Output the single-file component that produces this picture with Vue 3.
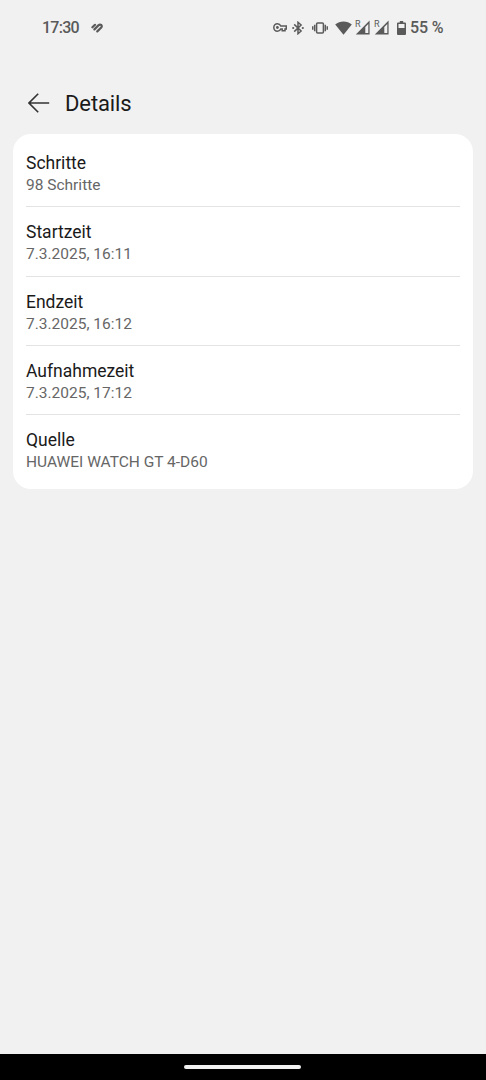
<script setup>
  import {ref} from "vue"

  const entries = ref([
    { label: "Schritte", value: "98 Schritte" },
    { label: "Startzeit", value: "7.3.2025, 16:11" },
    { label: "Endzeit", value: "7.3.2025, 16:12" },
    { label: "Aufnahmezeit", value: "7.3.2025, 17:12" },
    { label: "Quelle", value: "HUAWEI WATCH GT 4-D60" },
  ])
</script>

<template>
  <main>
    <div class="status-bar">
      <span class="clock">17:30</span>
      <svg class="heart" width="12" height="10" viewBox="0 0 12 10">
        <path d="M1.4 4.3 L4 1.8 M3.4 6.4 L7.4 2.4 Q8.8 1 10.2 1.9 Q11.3 3.2 10.2 4.5 L6.3 8.4" />
      </svg>

      <div class="status-icons">
        <svg class="key" width="14" height="9" viewBox="0 0 14 9">
          <path d="M7.8 3 Q6.9 .8 4.4 .8 A3.6 3.7 0 0 0 4.4 8.2 Q6.9 8.2 7.8 6 H9.2 V7.8 H12 V6 H13.3 V3 Z" />
          <circle cx="4.4" cy="4.5" r="1.4" />
        </svg>
        <svg class="bluetooth" width="12" height="14" viewBox="0 0 12 14">
          <path d="M2.2 3.4 L9.1 10 L6 12.7 V1.3 L9.1 4 L2.2 10.6" />
          <circle cx="1.2" cy="7" r="1.1" />
          <circle cx="10.8" cy="7" r="1.1" />
        </svg>
        <svg class="vibrate" width="16" height="12" viewBox="0 0 16 12">
          <rect x="4.6" y="1" width="6.8" height="10" rx="1" />
          <path d="M.7 4.3 V7.7 M2.7 2.8 V9.2 M13.3 2.8 V9.2 M15.3 4.3 V7.7" />
        </svg>
        <svg class="wifi" width="17" height="14" viewBox="0 0 17 14">
          <path d="M8.5 13.8 L.2 3.6 Q3.8 .4 8.5 .4 T16.8 3.6 Z" />
        </svg>
        <svg v-for="n in 2" :key="n" class="signal" width="15" height="15" viewBox="0 0 15 15">
          <text x="0" y="6.9">R</text>
          <path fill-rule="evenodd" d="M14.6 .6 V14.4 H.8 Z M13.3 4 L10.3 7 V13.1 H13.3 Z" />
        </svg>
        <svg class="battery" width="9" height="14" viewBox="0 0 9 14">
          <path fill-rule="evenodd" d="M2.8 0 H6.2 V1.4 H8 Q9 1.4 9 2.4 V13 Q9 14 8 14 H1 Q0 14 0 13 V2.4 Q0 1.4 1 1.4 H2.8 Z M1.5 2.9 V7 H7.5 V2.9 Z" />
        </svg>
        <span class="percent">55 %</span>
      </div>
    </div>

    <header>
      <svg class="back" width="22" height="20" viewBox="0 0 22 20">
        <path d="M21.2 10 H1.2 M10.2 .8 L1 10 L10.2 19.2" />
      </svg>
      <h1>Details</h1>
    </header>

    <div class="card">
      <div v-for="entry in entries" :key="entry.label" class="entry">
        <p class="label">{{ entry.label }}</p>
        <p class="value">{{ entry.value }}</p>
      </div>
    </div>

    <footer>
      <div class="handle"></div>
    </footer>
  </main>
</template>

<style>
body{
  margin: 0;
  background-color: #f1f1f1;
}
</style>

<style scoped>
main{
  height: 1080px;
  display: flex;
  flex-direction: column;
  background-color: #f1f1f1;
  font-family: Roboto, "Liberation Sans", sans-serif;
}

.status-bar{
  height: 55px;
  padding: 0 43px 0 42px;
  display: flex;
  align-items: center;
  color: #5a5a5a;
  font-size: 16px;
  font-weight: 500;
}

.clock{
  width: 38px;
  letter-spacing: -0.75px;
  white-space: nowrap;
}

svg{
  display: block;
  flex: none;
  fill: none;
  stroke: #5a5a5a;
}

.heart{
  margin-left: 11px;
  stroke-width: 2.2;
  stroke-linecap: round;
}

.status-icons{
  margin-left: auto;
  display: flex;
  align-items: center;
}

.key{
  stroke-width: 1.5;
}

.key circle,
.bluetooth circle{
  fill: #5a5a5a;
  stroke: none;
}

.bluetooth{
  margin-left: 5px;
  stroke-width: 1.5;
}

.vibrate{
  margin-left: 8px;
  stroke-width: 1.5;
}

.wifi,
.signal,
.battery{
  fill: #5a5a5a;
  stroke: none;
}

.wifi{
  margin-left: 7.5px;
}

.signal{
  margin-left: 3px;
}

.signal + .signal{
  margin-left: 4px;
}

.signal text{
  font-size: 9px;
  font-weight: 400;
}

.battery{
  margin-left: 8px;
}

.percent{
  width: 33px;
  margin-left: 4px;
  letter-spacing: -0.1px;
  white-space: nowrap;
}

header{
  height: 78.5px;
  padding-left: 28px;
  box-sizing: border-box;
  padding-top: 18px;
  display: flex;
  align-items: center;
}

.back{
  stroke: #333;
  stroke-width: 1.6;
}

h1{
  margin: 0 0 0 15px;
  font-size: 22px;
  font-weight: 400;
  letter-spacing: -0.1px;
  color: #1a1a1a;
}

.card{
  margin: 0 13px;
  padding: 3.6px 13px 5px;
  background-color: white;
  border-radius: 18px;
}

.entry{
  height: 69.3px;
  box-sizing: border-box;
  padding-top: 15px;
}

.entry + .entry{
  padding-top: 14px;
  border-top: 1px solid #e3e3e3;
}

p{
  margin: 0;
}

.label{
  font-size: 17.5px;
  line-height: 22px;
  color: #1a1a1a;
}

.value{
  font-size: 15.5px;
  line-height: 22px;
  color: #666;
}

footer{
  height: 26px;
  margin-top: auto;
  background-color: black;
  display: flex;
  align-items: center;
  justify-content: center;
}

.handle{
  width: 117px;
  height: 4px;
  margin-right: 1px;
  border-radius: 2px;
  background-color: #f1f1f1;
}
</style>
